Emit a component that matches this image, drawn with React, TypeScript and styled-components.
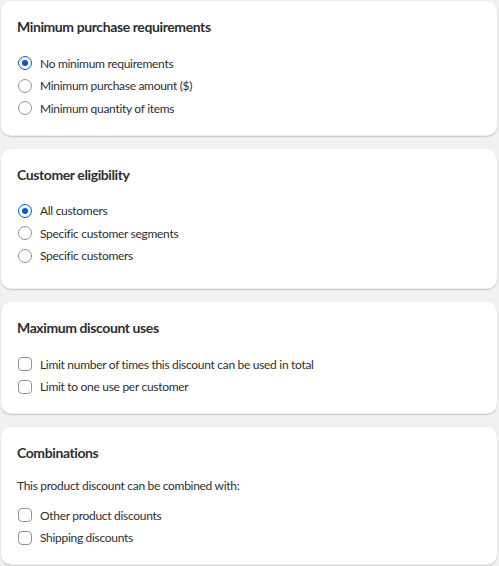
import React from "react";
import styled, { createGlobalStyle } from "styled-components";

const GlobalStyle = createGlobalStyle`
  html, body {
    margin: 0;
    padding: 0;
    background: #f1f1f1;
  }
  body {
    font-family: Lato, "Noto Sans", "Liberation Sans", sans-serif;
    color: #303030;
  }
`;

const Page = styled.div`
  display: flex;
  flex-direction: column;
  gap: 13px;
  padding: 1px 2px 2px 1px;
`;

const Card = styled.section<{ $bottom?: number }>`
  background: #ffffff;
  border-radius: 10px;
  padding: 16px 16px ${(p) => p.$bottom ?? 16}px 16px;
  box-shadow: 0 1px 0 0 rgba(26, 26, 26, 0.07), 0 1px 2px 0 rgba(0, 0, 0, 0.12),
    inset 0 -1px 0 0 rgba(0, 0, 0, 0.06);
`;

const Title = styled.h2<{ $gap?: number }>`
  margin: 0 0 ${(p) => p.$gap ?? 15}px 0;
  font-size: 14px;
  line-height: 20px;
  font-weight: 700;
  letter-spacing: -0.4px;
  color: #303030;
`;

const Description = styled.p`
  margin: 0 0 8px 0;
  font-size: 12px;
  line-height: 20px;
  letter-spacing: -0.3px;
  color: #303030;
`;

const List = styled.div`
  display: flex;
  flex-direction: column;
`;

const Row = styled.label`
  display: flex;
  align-items: center;
  gap: 8px;
  height: 22.5px;
  padding-left: 1px;
  font-size: 12px;
  letter-spacing: -0.3px;
  color: #303030;
  cursor: pointer;
`;

const RadioDot = styled.span<{ $checked?: boolean }>`
  box-sizing: border-box;
  width: 14px;
  height: 14px;
  border-radius: 50%;
  border: ${(p) => (p.$checked ? "1.5px solid #005bd3" : "1px solid #949494")};
  display: flex;
  align-items: center;
  justify-content: center;
  flex-shrink: 0;
  &::after {
    content: "";
    display: ${(p) => (p.$checked ? "block" : "none")};
    width: 6px;
    height: 6px;
    border-radius: 50%;
    background: #005bd3;
  }
`;

const CheckBox = styled.span`
  box-sizing: border-box;
  width: 14px;
  height: 14px;
  border-radius: 4px;
  border: 1px solid #949494;
  flex-shrink: 0;
`;

type RadioGroupProps = { options: string[]; selected: number };

const RadioGroup: React.FC<RadioGroupProps> = ({ options, selected }) => (
  <List>
    {options.map((o, i) => (
      <Row key={o}>
        <RadioDot $checked={i === selected} />
        {o}
      </Row>
    ))}
  </List>
);

const CheckGroup: React.FC<{ options: string[] }> = ({ options }) => (
  <List>
    {options.map((o) => (
      <Row key={o}>
        <CheckBox />
        {o}
      </Row>
    ))}
  </List>
);

const App: React.FC = () => {
  return (
    <>
      <GlobalStyle />
      <Page>
        <Card>
          <Title>Minimum purchase requirements</Title>
          <RadioGroup
            selected={0}
            options={[
              "No minimum requirements",
              "Minimum purchase amount ($)",
              "Minimum quantity of items",
            ]}
          />
        </Card>
        <Card $bottom={22}>
          <Title>Customer eligibility</Title>
          <RadioGroup
            selected={0}
            options={[
              "All customers",
              "Specific customer segments",
              "Specific customers",
            ]}
          />
        </Card>
        <Card $bottom={16}>
          <Title>Maximum discount uses</Title>
          <CheckGroup
            options={[
              "Limit number of times this discount can be used in total",
              "Limit to one use per customer",
            ]}
          />
        </Card>
        <Card $bottom={16}>
          <Title $gap={13}>Combinations</Title>
          <Description>This product discount can be combined with:</Description>
          <CheckGroup options={["Other product discounts", "Shipping discounts"]} />
        </Card>
      </Page>
    </>
  );
};

export default App;
